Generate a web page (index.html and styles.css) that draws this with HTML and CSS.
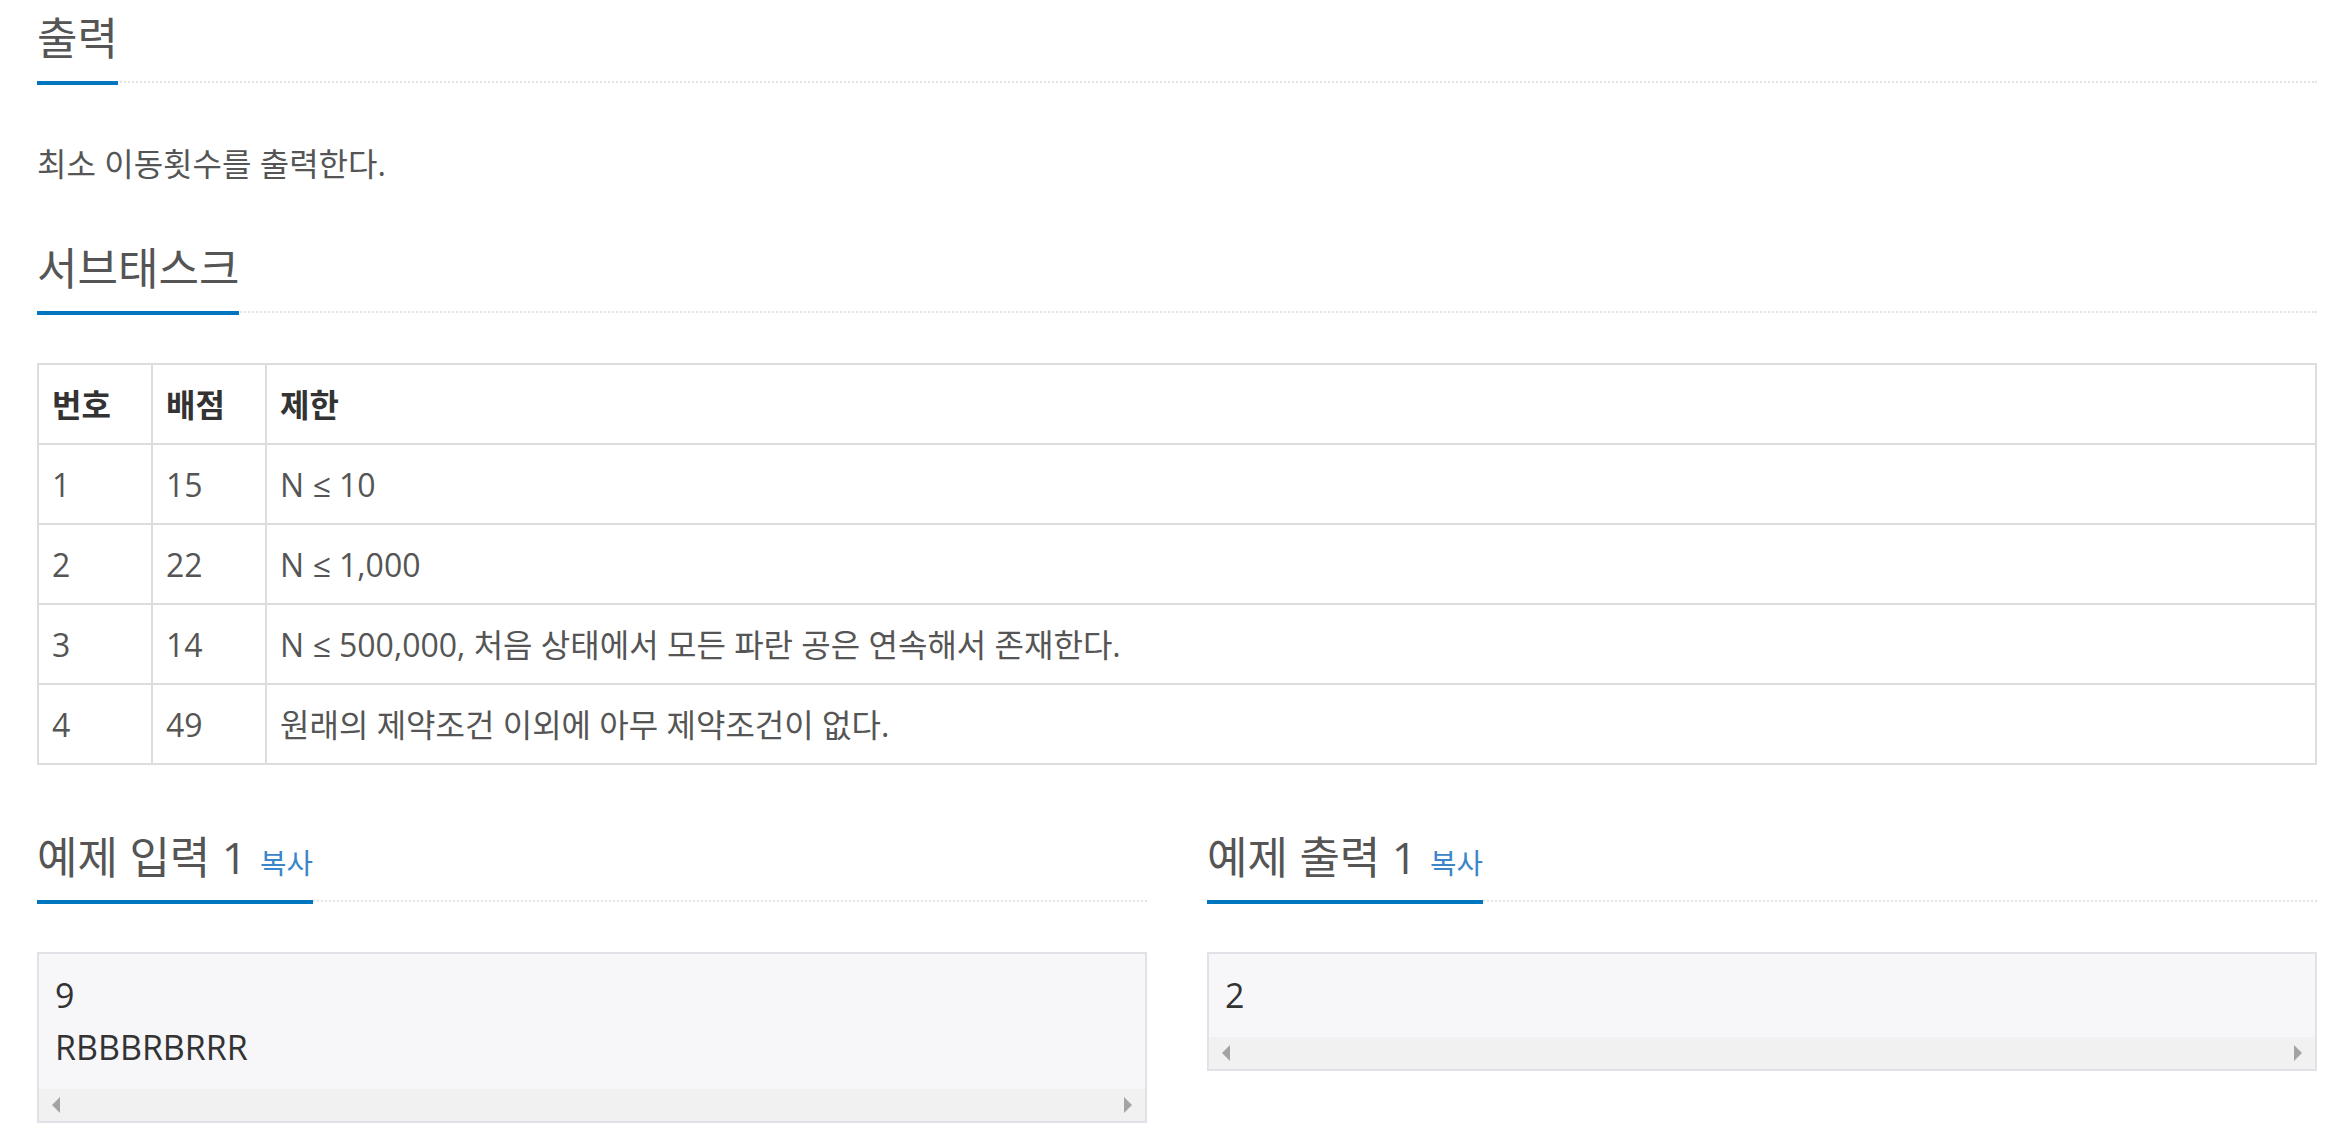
FILE: index.html
```html
<!DOCTYPE html>
<html lang="ko">
<head>
<meta charset="utf-8">
<title>출력</title>
<link rel="stylesheet" href="styles.css">
</head>
<body>
<main class="page">
  <section class="section section-output">
    <div class="headline"><h2>출력</h2></div>
    <div class="problem-text"><p>최소 이동횟수를 출력한다.</p></div>
  </section>

  <section class="section section-subtask">
    <div class="headline"><h2>서브태스크</h2></div>
    <table class="subtask-table">
      <colgroup><col class="col-num"><col class="col-score"><col></colgroup>
      <thead>
        <tr><th>번호</th><th>배점</th><th>제한</th></tr>
      </thead>
      <tbody>
        <tr><td>1</td><td>15</td><td>N ≤ 10</td></tr>
        <tr><td>2</td><td>22</td><td>N ≤ 1,000</td></tr>
        <tr><td>3</td><td>14</td><td>N ≤ 500,000, 처음 상태에서 모든 파란 공은 연속해서 존재한다.</td></tr>
        <tr><td>4</td><td>49</td><td>원래의 제약조건 이외에 아무 제약조건이 없다.</td></tr>
      </tbody>
    </table>
  </section>

  <div class="samples">
    <section class="sample">
      <div class="headline"><h2>예제 입력 1<span class="copy-button">복사</span></h2></div>
      <div class="sampledata">
        <pre>9
RBBBRBRRR</pre>
        <div class="fake-scrollbar"><span class="arrow arrow-left"></span><span class="arrow arrow-right"></span></div>
      </div>
    </section>
    <section class="sample">
      <div class="headline"><h2>예제 출력 1<span class="copy-button">복사</span></h2></div>
      <div class="sampledata">
        <pre>2</pre>
        <div class="fake-scrollbar"><span class="arrow arrow-left"></span><span class="arrow arrow-right"></span></div>
      </div>
    </section>
  </div>
</main>
</body>
</html>
```
FILE: styles.css
```css
* { box-sizing: border-box; }

html, body {
  margin: 0;
  padding: 0;
  background: #ffffff;
}

body {
  font-family: "Open Sans", "Noto Sans CJK KR", sans-serif;
  color: #555555;
}

.page {
  padding: 13.5px 28px 0 37px;
}

.headline {
  display: flex;
  border-bottom: 2px dotted #e3e3e3;
  margin-bottom: 50px;
}

.headline h2 {
  margin: 0 0 -4px 0;
  font-size: 44px;
  line-height: 48.4px;
  font-weight: 400;
  color: #555555;
  padding-bottom: 19.1px;
  border-bottom: 4px solid #0076c0;
  white-space: nowrap;
}

.section-output {
  padding-bottom: 54.3px;
}

.problem-text {
  padding-top: 5px;
}

.problem-text p {
  margin: 0;
  font-size: 32px;
  line-height: 51.2px;
  color: #555555;
}

.section-subtask {
  padding-bottom: 67.5px;
}

.subtask-table {
  width: 100%;
  border-collapse: collapse;
  table-layout: fixed;
  border: 2px solid #dddddd;
  font-size: 32px;
  line-height: 51px;
  color: #333333;
}

.col-num, .col-score { width: 114px; }

.subtask-table th,
.subtask-table td {
  border: 2px solid #dddddd;
  padding: 13.5px 13px;
  text-align: left;
  vertical-align: middle;
  white-space: nowrap;
}

.subtask-table th {
  font-weight: 700;
  color: #333333;
}

.subtask-table td {
  color: #555555;
}

.samples {
  display: flex;
  gap: 60px;
}

.sample {
  flex: 1 1 0;
  min-width: 0;
}

.copy-button {
  margin-left: 13px;
  font-size: 28.8px;
  line-height: 1;
  color: #3a86c8;
}

.sampledata {
  border: 2px solid #e1e1e8;
  background: #f7f7f9;
}

.sampledata pre {
  margin: 0;
  padding: 15px 15px 16px 16px;
  font-family: "Open Sans", "Noto Sans CJK KR", sans-serif;
  font-size: 34px;
  line-height: 52px;
  color: #333333;
}

.fake-scrollbar {
  display: flex;
  justify-content: space-between;
  align-items: center;
  height: 32px;
  padding: 0 13px;
  background: #f1f1f1;
}

.arrow {
  width: 0;
  height: 0;
  border-top: 8px solid transparent;
  border-bottom: 8px solid transparent;
}

.arrow-left { border-right: 8px solid #a3a3a3; }
.arrow-right { border-left: 8px solid #a3a3a3; }
```
